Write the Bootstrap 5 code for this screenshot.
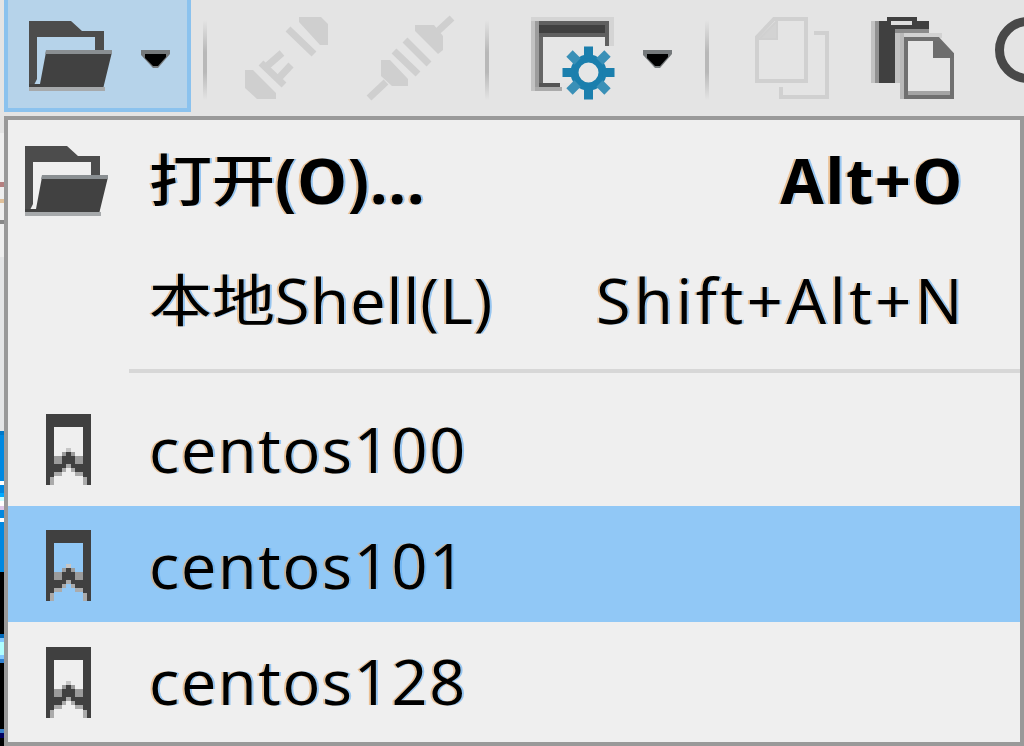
<!DOCTYPE html>
<html lang="zh-CN">
<head>
<meta charset="utf-8">
<meta name="viewport" content="width=device-width, initial-scale=1">
<title>打开</title>
<link href="https://cdn.jsdelivr.net/npm/bootstrap@5.3.0/dist/css/bootstrap.min.css" rel="stylesheet">
<style>
body{width:1024px;height:746px;background:#e4e4e4;color:#000;font-family:"Open Sans","Noto Sans CJK SC",sans-serif}
svg{display:block;flex:none}
.toolbar{height:116px}
.open-btn{width:187px;height:112px;margin:0 12px 0 4px;background:#b6d3ea;border:4px solid #8bc2ee;border-top:0;border-radius:0;padding:0}
.open-btn .folder-ico{margin:17px 0 0 21px}
.open-btn .caret-ico{margin:50px 0 0 28px}
.rule{width:4px;height:80px;margin-top:20px;background:linear-gradient(#e4e4e4,#b8b8b8 40%,#b8b8b8 65%,#e4e4e4)}
.behind{width:4px;background:linear-gradient(#e4e4e4 17px,#efefef 17px 66px,#b58080 66px 71px,#efefef 71px 83px,#e0c09a 83px 87px,#efefef 87px 104px,#888 104px 108px,#efefef 108px 141px,#e4e5e6 141px 315px,#0078c8 315px 319px,#0088e0 319px 365px,#fff 365px 369px,#0088e0 369px 377px,#00aaff 377px 381px,#cff 381px 385px,#fff 385px 390px,#dcc8e8 390px 394px,#0088e0 394px 402px,#fff 402px 406px,#0088e0 406px 456px,#000 456px 518px,#0068b8 518px 522px,#80c8ff 522px 526px,#b0ffff 526px 539px,#80c8ff 539px 543px,#3080d0 543px 547px,#000 547px 613px,#3a80c8 613px 617px,#000060 617px 622px,#000 622px)}
.menu-box{width:1020px;height:630px;background:#efefef;border:4px solid #999}
.menu-row{height:116px;font-size:63px;line-height:118px;white-space:nowrap;color:#000;letter-spacing:1.7px;text-shadow:-2px 0 #e8a45a99,2px 0 #5aa8f099}
.menu-row .ico{width:141px;flex:none}
.menu-row .folder-ico{margin:22px 0 0 17px}
.menu-row .mark-ico{margin:24px 0 0 38px}
.menu-row:last-child .mark-ico{margin-top:25px}
.keys{margin-right:54px}
.shell-row{letter-spacing:1px;line-height:120px}
.shell-row .keys{letter-spacing:3.6px}
.strong-row{font-weight:700;height:120px;line-height:120px;letter-spacing:.6px}
.strong-row .keys{letter-spacing:1.5px;margin-right:56px}
.cjk{display:inline-block;font-family:"Noto Sans CJK SC",sans-serif;font-size:63px;line-height:1;font-weight:400;letter-spacing:0;transform:scaleY(.88)}
.strong-row .cjk{font-weight:500}
.current{background:#91c8f6}
.sep{height:4px;margin:13px 0 17px 121px;background:#d7d7d7}
</style>
</head>
<body class="overflow-hidden">
<svg width="0" height="0" class="position-absolute">
<symbol id="folder" viewBox="0 0 84 74"><path d="M0 4H42L53 14H75V36H66V20H8V62L4 70H0Z" fill="#4c4c4c"/><path d="M17 35H83L74 72H0V67H11Z" fill="#414141"/><path d="M0 70H76V74H0Z" fill="#a6a9ab"/><path d="M17 33H83V37H16Z" fill="#8a8f92"/></symbol>
<symbol id="mark" viewBox="0 0 45 71"><path fill-rule="evenodd" fill="#404040" d="M0 0H45V71H41V63H37V58H29V54H25V50H20V54H16V58H8V63H4V71H0ZM8 13V50H16V42H20V38H25V42H29V50H37V13Z"/><path fill="#9b9b9b" d="M8 42H16V50H8ZM29 42H37V50H29ZM16 38H20V42H16ZM25 38H29V42H25Z"/><path fill="#ababab" d="M4 63H8V71H4ZM37 63H41V71H37ZM8 58H16V62H8ZM29 58H37V62H29ZM16 54H20V58H16ZM25 54H29V58H25ZM20 50H25V54H20Z"/><path fill="#c6c6c6" d="M20 34H25V38H20Z"/></symbol>
<symbol id="caret" viewBox="0 0 29 20"><path d="M0 0H29V4L17 18H12L0 5Z" fill="#75797b"/><path d="M4 4H25V7L17 16H12L4 8Z"/></symbol>
</svg>
<div class="toolbar d-flex align-items-start">
<button class="btn open-btn d-flex align-items-start" type="button"><svg class="folder-ico" width="84" height="74"><use href="#folder"/></svg><svg class="caret-ico" width="29" height="20"><use href="#caret"/></svg></button>
<div class="rule"></div>
<svg width="278" height="116" viewBox="207 0 278 116"><g fill="#cfcfcf" stroke="#cfcfcf">
<path stroke="none" d="M299 17H321L328 24V45H320L299 22ZM245 70H253L276 93V99H257L245 88Z"/>
<path fill="none" stroke-width="7" d="M288 29L314 54M261 63L284 85M266 67L282 53M278 79L291 65"/>
<path stroke="none" d="M381 60H390L408 79V86H392L381 76ZM415 25H434L443 36V50L438 54L415 31Z"/>
<path fill="none" stroke-width="7" d="M369 98L386 82M394 51L418 74M405 40L429 64M438 31L452 18"/></g></svg>
<div class="rule"></div>
<svg width="216" height="116" viewBox="489 0 216 116">
<path fill="#d4d4d4" d="M531 17H614V46H609V21H531Z"/><path fill="#c2c2c2" d="M531 21H539V91H531Z"/><path fill="#9c9c9c" d="M535 21H539V87H535Z"/><path fill="#666" d="M539 21H543V87H539Z"/><path fill="#606060" d="M539 21H609V46H605V37H539Z"/><path fill="#404040" d="M539 25H605V33H539Z"/><path fill="#555" d="M539 83H560V87H539Z"/><path fill="#aaa" d="M535 87H562V91H535Z"/><path fill="#e6e6e6" d="M543 37H605V50H600V83H543Z"/>
<g transform="translate(588.5 72.5)" stroke="#1b7fad" fill="none"><circle r="14" stroke-width="8"/><path stroke-width="9" d="M0-26V-14M0 14V27M-26 0H-14M14 0H26"/><path stroke-width="9" stroke="#3a90b7" d="M-19-19L-11-11M19-19L11-11M-19 19L-11 11M19 19L11 11"/></g>
<svg x="643" y="50" width="29" height="20"><use href="#caret"/></svg></svg>
<div class="rule"></div>
<svg width="315" height="116" viewBox="709 0 315 116">
<g fill="none" stroke="#d0d0d0" stroke-width="4"><path d="M774 19H806V81H757V37Z"/><path d="M759 39L777 21V39Z" fill="#d3d3d3" stroke-width="2"/><path d="M814 33H827V97H781V87"/></g>
<path fill="#c2c2c2" d="M871 21H900V83H871Z"/><path fill="#929292" d="M875 21H879V83H875Z"/><path fill="#404040" d="M879 21H887V17H917V21H929V29H895V83H879Z"/><path fill="#dedede" d="M891 21H912V25H891Z"/><path fill="#8b8b8b" d="M895 29H929V33H895Z"/>
<path fill="#d2d2d2" d="M900 33H942V38H900Z"/><path d="M906 39H938L952 54V97H906Z" fill="#e6e6e6" stroke="#707070" stroke-width="4"/><path d="M908 91H950V95H908Z" fill="#a4a4a4"/><path d="M902 33V99" stroke="#b9b9b9" stroke-width="4"/><path d="M933 41H941L954 54V58H933Z" fill="#6d6d6d"/>
<circle cx="1028" cy="50" r="28.5" fill="none" stroke="#484848" stroke-width="9"/></svg>
</div>
<div class="d-flex">
<div class="behind"></div>
<div class="menu-box">
<div class="menu-row strong-row d-flex"><span class="ico"><svg class="folder-ico" width="84" height="74"><use href="#folder"/></svg></span><span><span class="cjk">打开</span>(O)...</span><span class="keys ms-auto">Alt+O</span></div>
<div class="menu-row shell-row d-flex"><span class="ico"></span><span><span class="cjk">本地</span>Shell(L)</span><span class="keys ms-auto">Shift+Alt+N</span></div>
<div class="sep"></div>
<div class="menu-row d-flex"><span class="ico"><svg class="mark-ico" width="45" height="71"><use href="#mark"/></svg></span><span>centos100</span></div>
<div class="menu-row d-flex current"><span class="ico"><svg class="mark-ico" width="45" height="71"><use href="#mark"/></svg></span><span>centos101</span></div>
<div class="menu-row d-flex"><span class="ico"><svg class="mark-ico" width="45" height="71"><use href="#mark"/></svg></span><span>centos128</span></div>
</div>
</div>
<script src="https://cdn.jsdelivr.net/npm/bootstrap@5.3.0/dist/js/bootstrap.bundle.min.js"></script>
</body>
</html>
